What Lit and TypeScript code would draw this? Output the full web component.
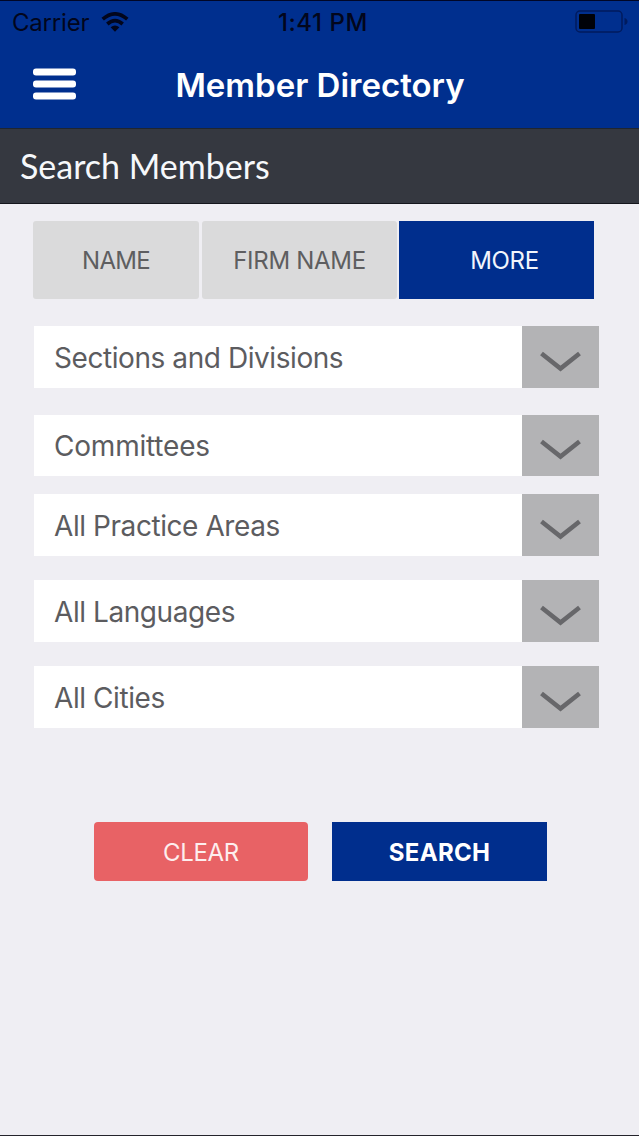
import { LitElement, html, css } from "lit";
import { customElement, property } from "lit/decorators.js";

@customElement("status-bar")
class StatusBar extends LitElement {
  static styles = css`
    :host { display: flex; height: 43px; box-sizing: border-box; border-top: 1px solid #000626; color: #02061c;
      font: 400 24px/43px Inter, sans-serif; }
    .side { width: 213px; display: flex; align-items: center; box-sizing: border-box; }
    .left { padding-left: 12px; gap: 12px; }
    .carrier { letter-spacing: -0.2px; }
    .clock { flex: 1; text-align: center; font-weight: 500; padding-left: 7px; letter-spacing: 0.6px; }
    .right { justify-content: flex-end; padding-right: 10px; }
    svg { display: block; }
  `;
  render() {
    return html`
      <div class="side left">
        <span class="carrier">Carrier</span>
        <svg width="28" height="20" viewBox="0 0 28 20">
          <g fill="none" stroke="#02061c" stroke-width="3.7">
            <path d="M1.7 7.2 Q14 -3.4 26.3 7.2" />
            <path d="M6.3 12 Q14 5.4 21.7 12" />
          </g>
          <path d="M9.6 15.2 Q14 11.6 18.4 15.2 L14 19.7 Z" fill="#02061c" />
        </svg>
      </div>
      <div class="clock">1:41 PM</div>
      <div class="side right">
        <svg width="54" height="24" viewBox="0 0 54 24">
          <rect x="1" y="1" width="46" height="21" rx="4" fill="none" stroke="#001b5e" stroke-width="1.5" />
          <rect x="4" y="4" width="16" height="15" rx="1" fill="#000208" />
          <path d="M49.5 8 Q52.5 9 52.5 11.5 Q52.5 14 49.5 15 Z" fill="#001b5e" />
        </svg>
      </div>`;
  }
}

@customElement("select-field")
class SelectField extends LitElement {
  @property() label = "";
  static styles = css`
    :host { display: flex; width: 565px; height: 62px; background: #fff; letter-spacing: -0.43px; line-height: 64px; }
    .label { flex: 1; padding-left: 20px; font-family: Inter, sans-serif; font-size: 28px; color: #5c5c5f; white-space: nowrap; }
    .arrow { width: 77px; background: #b3b3b5; display: flex; align-items: center; justify-content: center; }
    svg { display: block; margin: 9px 0 0 0; }
  `;
  render() {
    return html`
      <div class="label"><span>${this.label}</span></div>
      <div class="arrow">
        <svg width="42" height="24" viewBox="0 0 42 24">
          <path d="M1.5 3.5 L20.5 18.5 L39.5 3.5" fill="none" stroke="#67676a" stroke-width="4.6" />
        </svg>
      </div>`;
  }
}

@customElement("app-root")
class AppRoot extends LitElement {
  static styles = css`
    :host { display: flex; flex-direction: column; width: 639px; height: 1136px; box-sizing: border-box;
      background: #efeef3; border-bottom: 1px solid #24232b; overflow: hidden;
      font-family: Inter, sans-serif; }
    .header { background: #002f8e; height: 128px; flex: none; }
    .nav { display: flex; height: 82px; align-items: center; }
    .menu { width: 120px; padding-left: 33px; box-sizing: border-box; }
    .menu svg { display: block; }
    .title { flex: 1; text-align: center; margin-right: 119px; padding-top: 2px; font: 600 33px/84px Inter, sans-serif; color: #fff; }
    .subheader { height: 76px; flex: none; box-sizing: border-box; background: #353840; border-top: 1px solid #20262f;
      border-bottom: 1px solid #14161c; padding-left: 20px; font: 400 34px/73px Lato, sans-serif; color: #f6f8fb; }
    .tabs { display: flex; gap: 3px; padding: 17px 0 0 33px; height: 78px; }
    .tab { border-radius: 3px; background: #dadadb; color: #5e5e60; text-align: center;
      font: 400 24px/79px Inter, sans-serif; }
    .name { width: 166px; letter-spacing: -0.7px; }
    .firm { width: 195px; letter-spacing: -0.3px; }
    .more { width: 195px; margin-left: -1px; border-radius: 0; background: #002e8d; color: #f2f5fc; padding-left: 16px; box-sizing: border-box; letter-spacing: -0.3px; }
    .fields { display: flex; flex-direction: column; gap: 24px; padding: 27px 0 0 34px; }
    .second { height: 61px; margin-top: 3px; margin-bottom: -6px; letter-spacing: -0.2px; line-height: 62px; }
    .actions { display: flex; gap: 24px; padding: 94px 0 0 94px; }
    .button { height: 59px; font: 400 24px/61px Inter, sans-serif; text-align: center; color: #fff; }
    .clear { width: 214px; border-radius: 4px; background: #e86265; color: #fdeeee; letter-spacing: -0.3px; }
    .search { width: 215px; background: #002e8d; font-weight: 700; letter-spacing: 0.3px; }
  `;
  render() {
    return html`
      <div class="header">
        <status-bar></status-bar>
        <div class="nav">
          <div class="menu">
            <svg width="43" height="32" viewBox="0 0 43 32" fill="#fff">
              <rect y="0.5" width="43" height="7" rx="3" />
              <rect y="12.5" width="43" height="7" rx="3" />
              <rect y="24.5" width="43" height="7" rx="3" />
            </svg>
          </div>
          <div class="title"><span>Member Directory</span></div>
        </div>
      </div>
      <div class="subheader"><span>Search Members</span></div>
      <div class="tabs">
        <div class="tab name">NAME</div>
        <div class="tab firm">FIRM NAME</div>
        <div class="tab more">MORE</div>
      </div>
      <div class="fields">
        <select-field label="Sections and Divisions"></select-field>
        <select-field class="second" label="Committees"></select-field>
        <select-field label="All Practice Areas"></select-field>
        <select-field label="All Languages"></select-field>
        <select-field label="All Cities"></select-field>
      </div>
      <div class="actions">
        <div class="button clear">CLEAR</div>
        <div class="button search">SEARCH</div>
      </div>`;
  }
}
